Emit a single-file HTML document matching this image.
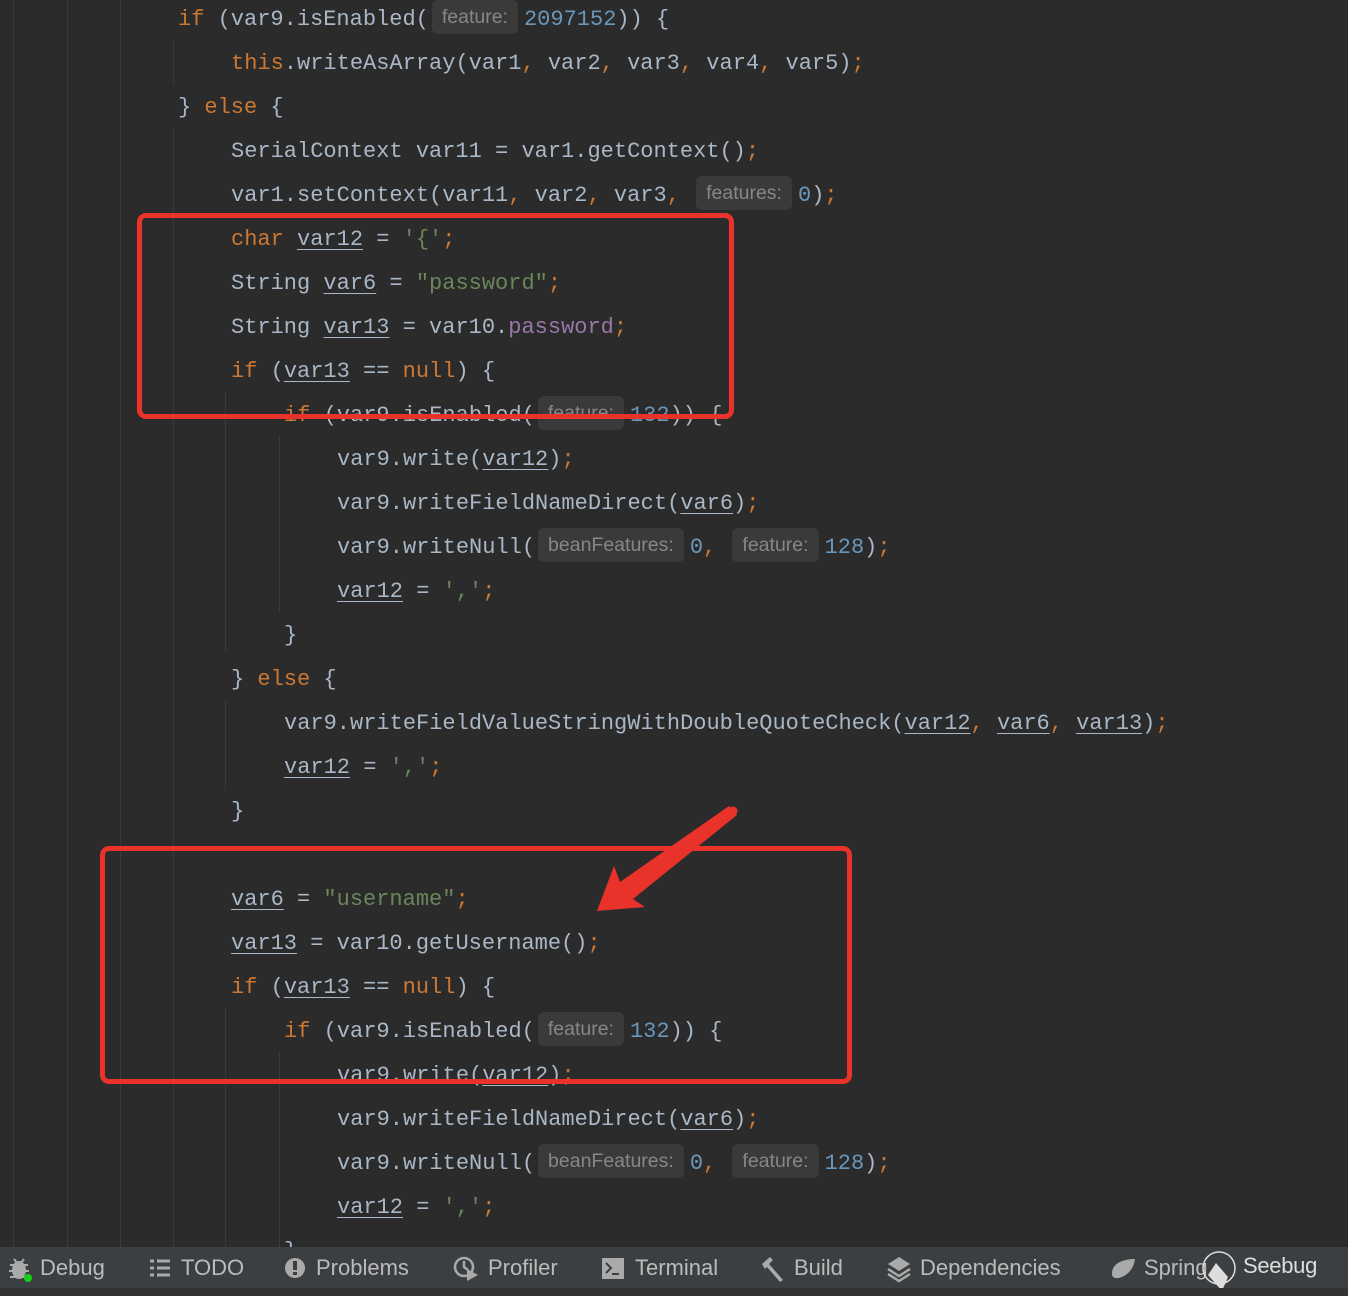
<!DOCTYPE html>
<html><head><meta charset="utf-8"><style>
html,body{margin:0;padding:0}
body{width:1348px;height:1296px;background:#2b2b2b;position:relative;overflow:hidden;font-family:"Liberation Mono","DejaVu Sans Mono",monospace;}
.l{position:absolute;height:44px;line-height:44px;font-size:22px;color:#a9b7c6;white-space:pre;margin-top:2px}
.k{color:#cc7832}.n{color:#6897bb}.s{color:#6a8759}.p{color:#9876aa}
.u{text-decoration:underline;text-underline-offset:4px;text-decoration-thickness:1px}
.h{display:inline-block;font-family:"Liberation Sans",sans-serif;font-size:19.5px;color:#878787;background:#3a3a3a;border-radius:6px;padding:0 10px;line-height:34px;height:34px;vertical-align:middle;margin:0 6px 4px 3px}
.g{position:absolute;width:1px;background:#3a3a3a}
.bar{position:absolute;left:0;top:1247px;width:1348px;height:41px;background:#3c3f41;font-family:"Liberation Sans",sans-serif;font-size:22px;color:#bbbbbb}
.bar span{position:absolute;top:8px}
.box{position:absolute;border:5px solid #e8322a;border-radius:9px;box-sizing:border-box}
</style></head><body>
<div class="g" style="left:13px;top:0;height:1247px"></div>
<div class="g" style="left:67px;top:0;height:1247px"></div>
<div class="g" style="left:120px;top:0;height:1247px"></div>
<div class="g" style="left:173px;top:40px;height:44px"></div>
<div class="g" style="left:173px;top:128px;height:1119px"></div>
<div class="g" style="left:225px;top:392px;height:260px"></div>
<div class="g" style="left:225px;top:700px;height:90px"></div>
<div class="g" style="left:279px;top:436px;height:176px"></div>
<div class="g" style="left:225px;top:1008px;height:239px"></div>
<div class="g" style="left:279px;top:1052px;height:195px"></div>

<div class="l" style="left:178px;top:-4px"><span class="k">if</span> (var9.isEnabled(<span class="h">feature:</span><span class="n">2097152</span>)) {</div>
<div class="l" style="left:231px;top:40px"><span class="k">this</span>.writeAsArray(var1<span class="k">,</span> var2<span class="k">,</span> var3<span class="k">,</span> var4<span class="k">,</span> var5)<span class="k">;</span></div>
<div class="l" style="left:178px;top:84px">} <span class="k">else</span> {</div>
<div class="l" style="left:231px;top:128px">SerialContext var11 = var1.getContext()<span class="k">;</span></div>
<div class="l" style="left:231px;top:172px">var1.setContext(var11<span class="k">,</span> var2<span class="k">,</span> var3<span class="k">,</span> <span class="h">features:</span><span class="n">0</span>)<span class="k">;</span></div>
<div class="l" style="left:231px;top:216px"><span class="k">char</span> <span class="u">var12</span> = <span class="s">'{'</span><span class="k">;</span></div>
<div class="l" style="left:231px;top:260px">String <span class="u">var6</span> = <span class="s">"password"</span><span class="k">;</span></div>
<div class="l" style="left:231px;top:304px">String <span class="u">var13</span> = var10.<span class="p">password</span><span class="k">;</span></div>
<div class="l" style="left:231px;top:348px"><span class="k">if</span> (<span class="u">var13</span> == <span class="k">null</span>) {</div>
<div class="l" style="left:284px;top:392px"><span class="k">if</span> (var9.isEnabled(<span class="h">feature:</span><span class="n">132</span>)) {</div>
<div class="l" style="left:337px;top:436px">var9.write(<span class="u">var12</span>)<span class="k">;</span></div>
<div class="l" style="left:337px;top:480px">var9.writeFieldNameDirect(<span class="u">var6</span>)<span class="k">;</span></div>
<div class="l" style="left:337px;top:524px">var9.writeNull(<span class="h">beanFeatures:</span><span class="n">0</span><span class="k">,</span> <span class="h">feature:</span><span class="n">128</span>)<span class="k">;</span></div>
<div class="l" style="left:337px;top:568px"><span class="u">var12</span> = <span class="s">','</span><span class="k">;</span></div>
<div class="l" style="left:284px;top:612px">}</div>
<div class="l" style="left:231px;top:656px">} <span class="k">else</span> {</div>
<div class="l" style="left:284px;top:700px">var9.writeFieldValueStringWithDoubleQuoteCheck(<span class="u">var12</span><span class="k">,</span> <span class="u">var6</span><span class="k">,</span> <span class="u">var13</span>)<span class="k">;</span></div>
<div class="l" style="left:284px;top:744px"><span class="u">var12</span> = <span class="s">','</span><span class="k">;</span></div>
<div class="l" style="left:231px;top:788px">}</div>
<div class="l" style="left:231px;top:876px"><span class="u">var6</span> = <span class="s">"username"</span><span class="k">;</span></div>
<div class="l" style="left:231px;top:920px"><span class="u">var13</span> = var10.getUsername()<span class="k">;</span></div>
<div class="l" style="left:231px;top:964px"><span class="k">if</span> (<span class="u">var13</span> == <span class="k">null</span>) {</div>
<div class="l" style="left:284px;top:1008px"><span class="k">if</span> (var9.isEnabled(<span class="h">feature:</span><span class="n">132</span>)) {</div>
<div class="l" style="left:337px;top:1052px">var9.write(<span class="u">var12</span>)<span class="k">;</span></div>
<div class="l" style="left:337px;top:1096px">var9.writeFieldNameDirect(<span class="u">var6</span>)<span class="k">;</span></div>
<div class="l" style="left:337px;top:1140px">var9.writeNull(<span class="h">beanFeatures:</span><span class="n">0</span><span class="k">,</span> <span class="h">feature:</span><span class="n">128</span>)<span class="k">;</span></div>
<div class="l" style="left:337px;top:1184px"><span class="u">var12</span> = <span class="s">','</span><span class="k">;</span></div>
<div class="l" style="left:284px;top:1228px">}</div>

<div class="box" style="left:137px;top:213px;width:597px;height:206px"></div>
<div class="box" style="left:100px;top:846px;width:752px;height:238px"></div>
<svg style="position:absolute;left:0;top:0" width="1348" height="1296"><polygon fill="#e8322a" points="729,806 620,882 614,866 597,911 645,907 633,899 737,815"/><circle cx="733" cy="811" r="4.5" fill="#e8322a"/></svg>

<div class="bar">
<svg style="position:absolute;left:8px;top:9px" width="28" height="26" viewBox="0 0 28 26"><ellipse cx="11" cy="14" rx="7" ry="9" fill="#aaa"/><path d="M2 9h18M1 15h20M2 21h18M6 3l3 4M16 3l-3 4" stroke="#aaa" stroke-width="2"/><circle cx="20" cy="22" r="4" fill="#17d117"/></svg>
<span style="left:40px">Debug</span>
<svg style="position:absolute;left:149px;top:12px" width="22" height="18"><path d="M1 2h4M8 2h13M1 9h4M8 9h13M1 16h4M8 16h13" stroke="#aaa" stroke-width="3"/></svg>
<span style="left:181px">TODO</span>
<svg style="position:absolute;left:284px;top:10px" width="22" height="22"><circle cx="11" cy="11" r="10" fill="#aaa"/><rect x="9" y="4" width="4" height="9" fill="#3c3f41"/><rect x="9" y="15" width="4" height="3" fill="#3c3f41"/></svg>
<span style="left:316px">Problems</span>
<svg style="position:absolute;left:453px;top:8px" width="28" height="28"><circle cx="11" cy="12" r="9" fill="none" stroke="#aaa" stroke-width="2.5"/><path d="M11 6v6l4 3" stroke="#aaa" stroke-width="2.5" fill="none"/><path d="M14 14l11 6-11 6z" fill="#aaa"/></svg>
<span style="left:488px">Profiler</span>
<svg style="position:absolute;left:602px;top:11px" width="22" height="21"><rect width="22" height="21" fill="#aaa"/><path d="M4 5l5 5-5 5M10 16h7" stroke="#3c3f41" stroke-width="2" fill="none"/></svg>
<span style="left:635px">Terminal</span>
<svg style="position:absolute;left:760px;top:9px" width="26" height="26"><path d="M2 8l8-7 3 3-4 4 14 16-3 2L7 11 5 13z" fill="#aaa"/></svg>
<span style="left:794px">Build</span>
<svg style="position:absolute;left:886px;top:8px" width="26" height="28"><path d="M13 2l11 7-11 7L2 9z" fill="#aaa"/><path d="M2 14l11 7 11-7M2 19l11 7 11-7" stroke="#aaa" stroke-width="2.5" fill="none"/></svg>
<span style="left:920px">Dependencies</span>
<svg style="position:absolute;left:1110px;top:11px" width="26" height="22"><path d="M25 1C14 1 1 5 2 17c1 4 7 4 12 1 7-4 10-10 11-17z" fill="#aaa"/></svg>
<span style="left:1144px">Spring</span>
<svg style="position:absolute;left:1200px;top:0" width="40" height="48"><circle cx="19" cy="21" r="16" fill="none" stroke="#ddd" stroke-width="1.5"/><path d="M8 28l8-12 12 14-6 14z" fill="#ddd"/></svg>
<span style="left:1243px;top:6px;color:#ddd;font-size:22px;letter-spacing:-0.3px">Seebug</span>
</div>
<div style="position:absolute;left:0;top:1288px;width:1348px;height:8px;background:#313335"></div>
</body></html>
